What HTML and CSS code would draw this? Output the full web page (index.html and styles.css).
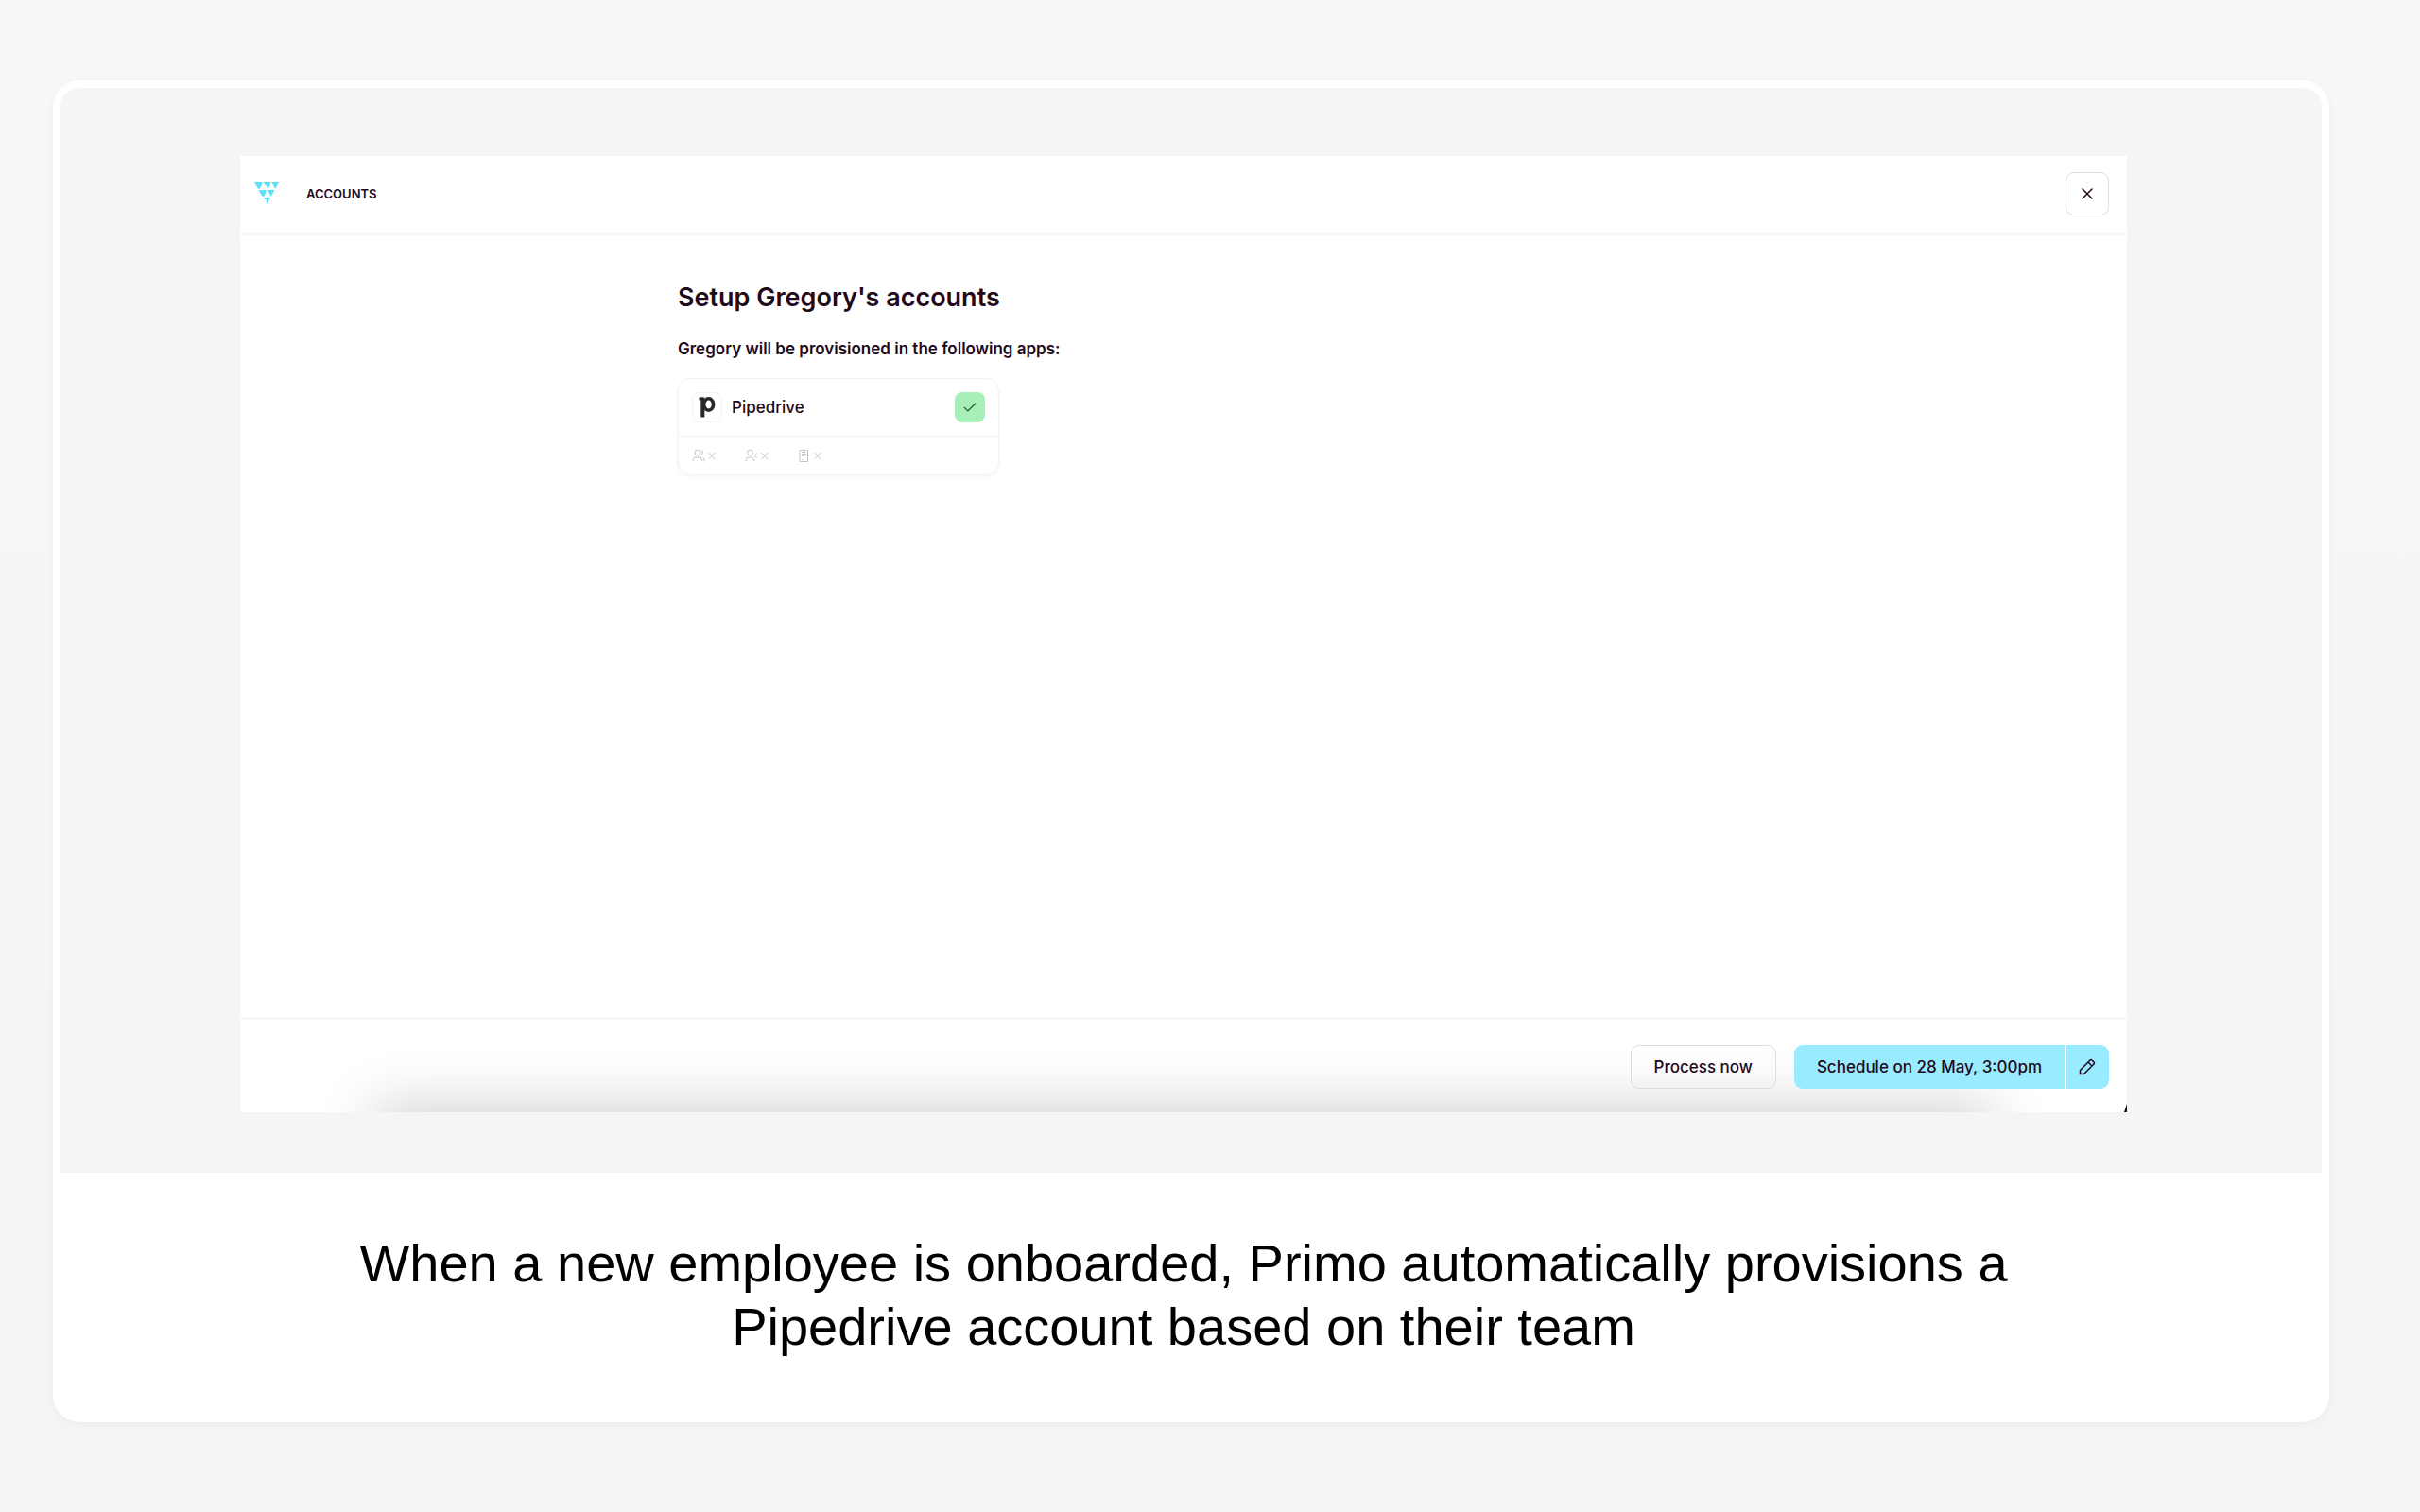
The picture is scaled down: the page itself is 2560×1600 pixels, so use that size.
FILE: index.html
```html
<!DOCTYPE html>
<html lang="en">
<head>
<meta charset="utf-8">
<meta name="viewport" content="width=device-width, initial-scale=1">
<title>Setup accounts</title>
<link rel="stylesheet" href="styles.css">
</head>
<body>
<figure class="card">
  <div class="stage">
    <div class="window">
      <header class="topbar">
        <svg class="logo" viewBox="0 0 26 24" aria-hidden="true">
          <g fill="#5ce1fa">
            <path d="M0 0H8V2.500L5.500 7L4 6.500ZM9 0H17V2.500L14.500 7L12.500 3.500ZM18 0H26L22 7L20.500 3.500Z"/>
            <path d="M4.500 8H12.500V10.500L10 15L8.500 14.500ZM13.500 8H21.500L17.500 15L16 11.500Z"/>
            <path d="M9 16H17L13 23.500V19Z"/>
          </g>
        </svg>
        <span class="section-name">ACCOUNTS</span>
        <button class="btn btn-close" type="button" aria-label="Close">
          <svg viewBox="0 0 12 12" width="12" height="12" fill="none" stroke="#1f0a1a" stroke-width="1.500" stroke-linecap="round"><path d="M1 1l10 10M11 1L1 11"/></svg>
        </button>
      </header>

      <main class="content">
        <div class="column">
          <h1 class="title">Setup Gregory's accounts</h1>
          <p class="lead">Gregory will be provisioned in the following apps:</p>
          <section class="app">
            <div class="app-head">
              <span class="app-icon">
                <svg viewBox="0 0 18 22" width="18" height="22" fill="none" stroke="#26292c" aria-hidden="true">
                  <ellipse cx="10.600" cy="8" rx="5" ry="6.200" stroke-width="3.600"/>
                  <path d="M4.300 0.500V21.500" stroke-width="4"/>
                  <path d="M0.500 2H5" stroke-width="3"/>
                </svg>
              </span>
              <span class="app-name">Pipedrive</span>
              <span class="app-check">
                <svg viewBox="0 0 14 10" width="14" height="10" fill="none" stroke="#1b5e33" stroke-width="1.200" aria-hidden="true"><path d="M.8 4.800L4.800 8.800L13.200.8"/></svg>
              </span>
            </div>
            <div class="app-foot">
              <svg class="meta" viewBox="0 0 26 14" aria-hidden="true">
                <circle cx="6" cy="4" r="3"/><path d="M1 13.500V12Q1 9 4 9H7.500Q10.500 9 10.500 12V13.500M9.500 1Q12 2 11.500 4.500Q11 6.500 9.500 7M11.500 9Q13.200 10 13.200 12V13.500M17.500 4L24.500 11M24.500 4L17.500 11"/>
              </svg>
              <svg class="meta" viewBox="0 0 26 14" aria-hidden="true">
                <circle cx="5.500" cy="4" r="3"/><path d="M1 13.500V12Q1 9 4 9H6.500Q9.500 9 9.500 12V13.500M12.500 4.500L10.500 7L12.500 9.500M17.500 4L24.500 11M24.500 4L17.500 11"/>
              </svg>
              <svg class="meta" viewBox="0 0 26 14" aria-hidden="true">
                <path d="M2 1.500H10.500V13.500H2ZM4 3.500H8.500M4 5.500H8.500M4 7.500H6.500M4 11.500H5.500M17.500 4L24.500 11M24.500 4L17.500 11"/>
              </svg>
            </div>
          </section>
        </div>
      </main>

      <footer class="actions">
        <button class="btn btn-outline" type="button">Process now</button>
        <div class="split">
          <button class="btn btn-primary" type="button">Schedule on 28 May, 3:00pm</button>
          <button class="btn btn-primary btn-edit" type="button" aria-label="Edit schedule">
            <svg viewBox="0 0 18 18" width="18" height="18" fill="none" stroke="#1f0a1a" stroke-width="1.500" stroke-linejoin="round"><path d="M1.500 16.500V12.500L12 2Q13 1 14 2L16 4Q17 5 16 6L5.500 16.500ZM10 4L14 8"/></svg>
          </button>
        </div>
      </footer>
    </div>
  </div>
  <figcaption class="caption"><p class="caption-text">When a new employee is onboarded, Primo automatically provisions a Pipedrive account based on their team</p></figcaption>
</figure>
</body>
</html>
```
FILE: styles.css
```css
* { box-sizing: border-box; }

body {
  margin: 0;
  min-height: 100vh;
  display: flex;
  flex-direction: column;
  padding: 85px 96px 95px 56px;
  background: linear-gradient(#f7f7f7, #f4f4f4);
  color: #1f0a1a;
  font-family: Inter, "Liberation Sans", sans-serif;
}

.card {
  flex: 1;
  display: flex;
  flex-direction: column;
  margin: 0;
  padding: 8px 8px 0;
  border-radius: 28px;
  background: #fff;
  box-shadow: 0 2px 6px rgba(0, 0, 0, 0.04);
}

.stage {
  flex: 1;
  display: flex;
  padding: 72px 206px 64px 190px;
  border-radius: 20px 20px 0 0;
  background: #f5f5f5;
}

.window {
  position: relative;
  flex: 1;
  display: flex;
  flex-direction: column;
  overflow: hidden;
  background: #fff;
}

/* Shade of the dock rising from the lower edge */
.window::before {
  content: "";
  position: absolute;
  top: 100%;
  left: 150px;
  right: 150px;
  height: 60px;
  box-shadow: 0 0 60px 8px rgba(0, 0, 0, 0.18);
}

/* Dark sliver behind the rounded lower corner */
.window::after {
  content: "";
  position: absolute;
  right: 0;
  bottom: 0;
  width: 3px;
  height: 9px;
  background: #111;
  clip-path: polygon(100% 0, 100% 100%, 0 100%);
}

.topbar {
  display: flex;
  align-items: center;
  height: 84px;
  padding: 0 19px 2px 15px;
  border-bottom: 2px solid #f7f7f7;
}

.logo { width: 26px; height: 24px; margin-right: 29px; }

.section-name {
  font-size: 13px;
  font-weight: 600;
}

.btn {
  position: relative;
  height: 46px;
  padding: 0 24px;
  border: 1px solid #dfdbd5;
  border-radius: 9px;
  background: #fff;
  color: inherit;
  font: 500 17px "Inter", "Liberation Sans", sans-serif;
}

.btn-close,
.btn-edit {
  display: grid;
  place-items: center;
  width: 46px;
  padding: 0;
}

.btn-close { margin-left: auto; }

.content {
  flex: 1;
  padding: 48px 40px;
}

.column {
  max-width: 1070px;
  margin: 0 auto;
}

.title {
  margin: 0 0 22px;
  font-size: 27px;
  font-weight: 600;
  line-height: 36px;
}

.lead {
  margin: 0 0 17px;
  font-size: 17px;
  font-weight: 600;
  line-height: 28px;
}

.app {
  width: 340px;
  border: 1px solid #f1f1ef;
  border-radius: 14px;
  box-shadow: 0 2px 4px rgba(0, 0, 0, 0.04);
}

.app-head {
  display: flex;
  align-items: center;
  height: 61px;
  padding: 0 14px;
  border-bottom: 1px solid #f1f1ef;
}

.app-icon,
.app-check {
  display: grid;
  place-items: center;
  width: 32px;
  height: 32px;
  border-radius: 8px;
}

.app-icon { border: 1px solid #f3f3ef; }

.app-check { margin-left: auto; background: #a6efb9; }

.app-name {
  margin-left: 10px;
  font-size: 17px;
  font-weight: 500;
}

.app-foot {
  display: flex;
  align-items: center;
  gap: 30px;
  height: 40px;
  padding: 0 14px;
}

.meta {
  width: 26px;
  height: 14px;
  fill: none;
  stroke: #c4c4c4;
}

.actions {
  display: flex;
  align-items: center;
  justify-content: flex-end;
  gap: 19px;
  height: 100px;
  padding: 3px 19px 0 0;
  border-top: 1px solid #eeeeee;
}

.btn-outline { background: transparent; }

.split { position: relative; display: flex; gap: 1px; }

.btn-primary {
  border: 0;
  border-radius: 9px 0 0 9px;
  background: #99ecff;
}

.btn-edit { border-radius: 0 9px 9px 0; }

.caption {
  padding: 62px 16px 68px 0;
  color: #000;
}

.caption-text {
  max-width: 1800px;
  margin: 0 auto;
  font: 56px/67px "Liberation Sans", Arial, sans-serif;
  text-align: center;
}
```
